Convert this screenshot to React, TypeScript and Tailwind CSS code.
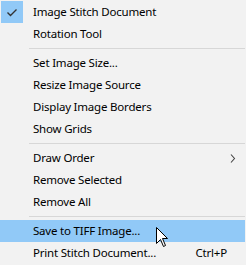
import React from 'react';

type Item =
  | { kind: 'sep' }
  | { kind: 'item'; label: string; checked?: boolean; submenu?: boolean; shortcut?: string; active?: boolean };

const items: Item[] = [
  { kind: 'item', label: 'Image Stitch Document', checked: true },
  { kind: 'item', label: 'Rotation Tool' },
  { kind: 'sep' },
  { kind: 'item', label: 'Set Image Size...' },
  { kind: 'item', label: 'Resize Image Source' },
  { kind: 'item', label: 'Display Image Borders' },
  { kind: 'item', label: 'Show Grids' },
  { kind: 'sep' },
  { kind: 'item', label: 'Draw Order', submenu: true },
  { kind: 'item', label: 'Remove Selected' },
  { kind: 'item', label: 'Remove All' },
  { kind: 'sep' },
  { kind: 'item', label: 'Save to TIFF Image...', active: true },
  { kind: 'item', label: 'Print Stitch Document...', shortcut: 'Ctrl+P' },
];

const Check = () => (
  <svg width="22" height="22" viewBox="0 0 22 22">
    <path d="M6.5 11.5 L9.5 14.5 L15.5 8.5" fill="none" stroke="#333" strokeWidth="1.4" />
  </svg>
);

const Chevron = () => (
  <svg width="6" height="9" viewBox="0 0 6 9">
    <path d="M1 0.5 L4.5 4.5 L1 8.5" fill="none" stroke="#444" strokeWidth="1.1" />
  </svg>
);

const Cursor = () => (
  <svg width="13" height="21" viewBox="0 0 13 21" className="absolute left-[156px] top-[227px]">
    <path
      d="M0.5 0.5 L0.5 16.5 L4.5 12.5 L7.5 19.5 L9.5 18.5 L6.5 11.5 L11.5 11.5 Z"
      fill="#fff"
      stroke="#000"
      strokeWidth="1"
      strokeLinejoin="miter"
    />
  </svg>
);

export default function App() {
  return (
    <div
      className="relative w-[246px] h-[265px] bg-[#f2f2f2] pt-[1px] pr-[1px] text-[11.5px] tracking-[-0.2px] text-black overflow-hidden"
      style={{ fontFamily: '"Segoe UI", "Noto Sans", sans-serif' }}
    >
      {items.map((it, i) =>
        it.kind === 'sep' ? (
          <div key={i} className="h-[7px] pt-[3px] pl-[29px]">
            <div className="h-[1px] bg-[#d7d7d7]" />
          </div>
        ) : (
          <div
            key={i}
            className={`relative flex items-center h-[22px] ${it.active ? 'bg-[#91c9f7]' : ''}`}
          >
            <div className="w-[33px] h-[22px] pl-[1px] shrink-0">
              {it.checked && (
                <div className="w-[22px] h-[22px] bg-[#91c9f7]">
                  <Check />
                </div>
              )}
            </div>
            <span className="flex-1 leading-none whitespace-nowrap">{it.label}</span>
            {it.shortcut && <span className="pr-[18px] leading-none">{it.shortcut}</span>}
            {it.submenu && (
              <span className="pr-[9px] flex items-center">
                <Chevron />
              </span>
            )}
          </div>
        ),
      )}
      <Cursor />
    </div>
  );
}
